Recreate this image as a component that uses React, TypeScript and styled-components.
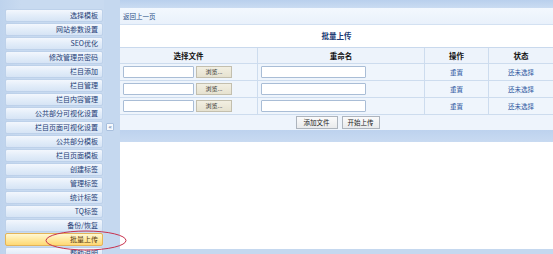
import React from "react";
import styled, { createGlobalStyle } from "styled-components";

const Global = createGlobalStyle`
  html, body { margin: 0; padding: 0; }
  body {
    background: #c5d8ef;
    font-family: "Noto Sans CJK SC", "Liberation Sans", sans-serif;
    overflow: hidden;
  }
`;

const Page = styled.div`
  position: relative;
  display: flex;
  width: 553px;
  height: 254px;
  overflow: hidden;
  background: #c5d8ef;
`;

const Sidebar = styled.nav`
  width: 104px;
  flex: none;
  padding: 9px 1px 0 5px;
  box-sizing: border-box;
  display: flex;
  flex-direction: column;
  gap: 1px;
  background: linear-gradient(90deg, #bed3ed 0%, #c8daf0 20%, #c8daf0 100%);
`;

const MenuItem = styled.div<{ $active?: boolean }>`
  height: 13px;
  flex: none;
  box-sizing: border-box;
  border-radius: 2px;
  border: 1px solid ${(p) => (p.$active ? "#e3b458" : "#bdd1ea")};
  background: ${(p) =>
    p.$active
      ? "linear-gradient(180deg, #fff8d4 0%, #ffe9a0 50%, #ffd874 100%)"
      : "linear-gradient(180deg, #f3f7fd 0%, #e3edf9 50%, #d6e4f5 100%)"};
  color: ${(p) => (p.$active ? "#5a3a10" : "#1e3d76")};
  font-size: 7px;
  line-height: 11px;
  text-align: right;
  padding-right: 4px;
  white-space: nowrap;
`;

const Splitter = styled.div`
  width: 16px;
  flex: none;
  display: flex;
  align-items: flex-start;
  padding-top: 123px;
  padding-left: 2px;
  box-sizing: border-box;
`;

const Toggle = styled.div`
  width: 8px;
  height: 8px;
  box-sizing: border-box;
  background: #f6f9fd;
  border: 1px solid #a9c0de;
  border-radius: 1px;
  color: #2b4d86;
  font-size: 6px;
  line-height: 6px;
  text-align: center;
  font-family: "DejaVu Sans", sans-serif;
`;

const Main = styled.main`
  flex: 1;
  display: flex;
  flex-direction: column;
  background: linear-gradient(180deg, #b9d0ed 0px, #cadcf2 8px, #c5d8ef 9px);
  padding-top: 8px;
  padding-bottom: 5px;
  box-sizing: border-box;
`;

const Panel = styled.section`
  background: #eef4fc;
  display: flex;
  flex-direction: column;
`;

const BackBar = styled.div`
  height: 17px;
  box-sizing: border-box;
  padding-left: 3px;
  font-size: 6.5px;
  line-height: 17px;
  color: #2a4f86;
  background: linear-gradient(180deg, #f3f8fe 0%, #e9f1fb 100%);
  border-bottom: 1px solid #d3e1f2;
`;

const TitleRow = styled.div`
  height: 23px;
  background: #ffffff;
  text-align: center;
  font-size: 7.5px;
  font-weight: bold;
  line-height: 22px;
  color: #1c3b74;
  border-bottom: 1px solid #c9d9ed;
  box-sizing: border-box;
`;

const Grid = styled.div`
  display: grid;
  grid-template-columns: 138px 167px 64px 1fr;
`;

const Cell = styled.div<{ $head?: boolean; $align?: "left" | "center"; $last?: boolean }>`
  height: ${(p) => (p.$head ? "16px" : "17px")};
  box-sizing: border-box;
  border-bottom: 1px solid #cddcee;
  border-right: ${(p) => (p.$last ? "none" : "1px solid #cddcee")};
  display: flex;
  align-items: center;
  justify-content: ${(p) => (p.$align === "left" ? "flex-start" : "center")};
  padding-left: ${(p) => (p.$align === "left" ? "3px" : "0")};
  gap: 2px;
  font-size: ${(p) => (p.$head ? "7.5px" : "6.5px")};
  font-weight: ${(p) => (p.$head ? "bold" : "normal")};
  color: ${(p) => (p.$head ? "#111" : "#2c56a0")};
  background: ${(p) => (p.$head ? "#edf3fb" : "#eff5fc")};
`;

const TextBox = styled.div<{ $w: number }>`
  width: ${(p) => p.$w}px;
  height: 12px;
  box-sizing: border-box;
  background: #fff;
  border: 1px solid #a9bdd6;
  border-radius: 1px;
`;

const Browse = styled.div`
  width: 36px;
  height: 12px;
  box-sizing: border-box;
  background: linear-gradient(180deg, #f2efe2 0%, #e6e2d0 100%);
  border: 1px solid #c3bfae;
  font-size: 6px;
  line-height: 10px;
  color: #333;
  text-align: center;
`;

const ActionRow = styled.div`
  height: 15px;
  display: flex;
  justify-content: center;
  align-items: center;
  gap: 4px;
  padding-left: 2px;
`;

const Btn = styled.div<{ $w: number }>`
  width: ${(p) => p.$w}px;
  height: 13px;
  box-sizing: border-box;
  background: linear-gradient(180deg, #fbfbfb 0%, #e9eaec 100%);
  border: 1px solid #adb4bd;
  font-size: 6.5px;
  line-height: 11px;
  text-align: center;
  color: #222;
`;

const Spacer = styled.div`
  height: 12px;
  flex: none;
  background: linear-gradient(180deg, #bdd2ee 0%, #c8daf1 100%);
`;

const Blank = styled.div`
  flex: 1;
  background: #ffffff;
`;

const Annotation = styled.svg`
  position: absolute;
  left: 44px;
  top: 229px;
  pointer-events: none;
`;

const menu = [
  "选择模板",
  "网站参数设置",
  "SEO优化",
  "修改管理员密码",
  "栏目添加",
  "栏目管理",
  "栏目内容管理",
  "公共部分可视化设置",
  "栏目页面可视化设置",
  "公共部分模板",
  "栏目页面模板",
  "创建标签",
  "管理标签",
  "统计标签",
  "TQ标签",
  "备份/恢复",
  "批量上传",
  "帮助说明",
];

export default function App() {
  return (
    <Page>
      <Global />
      <Sidebar>
        {menu.map((m) => (
          <MenuItem key={m} $active={m === "批量上传"}>
            {m}
          </MenuItem>
        ))}
      </Sidebar>
      <Splitter>
        <Toggle>«</Toggle>
      </Splitter>
      <Main>
        <Panel>
          <BackBar>返回上一页</BackBar>
          <TitleRow>批量上传</TitleRow>
          <Grid>
            <Cell $head>选择文件</Cell>
            <Cell $head>重命名</Cell>
            <Cell $head>操作</Cell>
            <Cell $head $last>状态</Cell>
            {[0, 1, 2].map((i) => (
              <React.Fragment key={i}>
                <Cell $align="left">
                  <TextBox $w={71} />
                  <Browse>浏览...</Browse>
                </Cell>
                <Cell $align="left">
                  <TextBox $w={105} />
                </Cell>
                <Cell>重置</Cell>
                <Cell $last>还未选择</Cell>
              </React.Fragment>
            ))}
          </Grid>
          <ActionRow>
            <Btn $w={42}>添加文件</Btn>
            <Btn $w={38}>开始上传</Btn>
          </ActionRow>
        </Panel>
        <Spacer />
        <Blank />
      </Main>
      <Annotation width="84" height="24" viewBox="0 0 84 24">
        <ellipse cx="42" cy="11.5" rx="40" ry="9.5" fill="none" stroke="#c8324e" strokeWidth="1" />
      </Annotation>
    </Page>
  );
}
